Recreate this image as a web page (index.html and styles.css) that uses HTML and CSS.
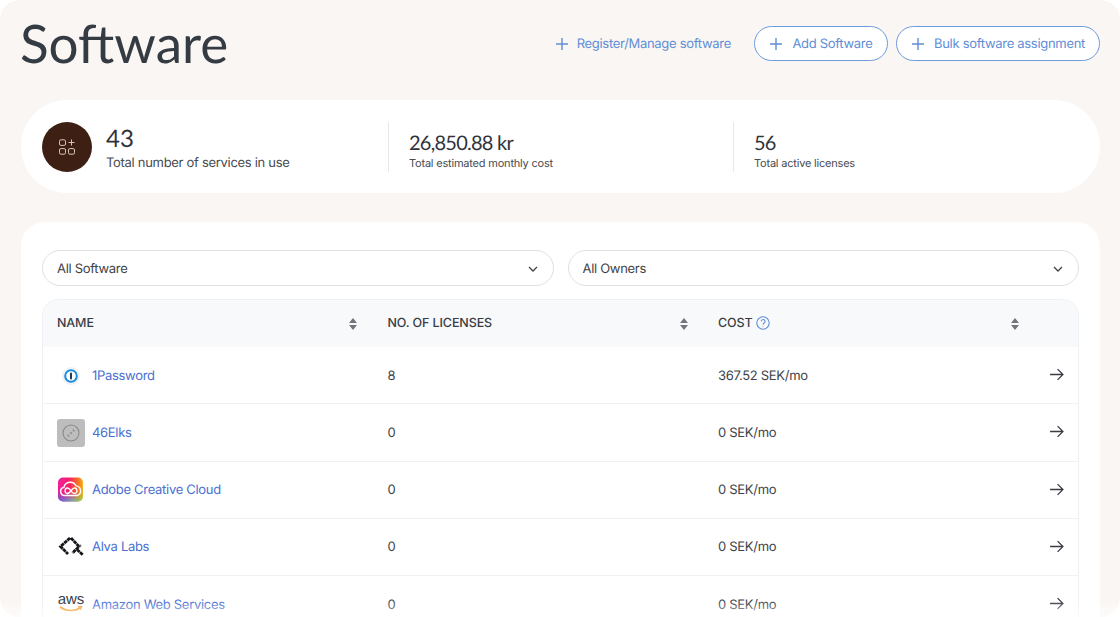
FILE: index.html
```html
<!DOCTYPE html>
<html lang="en">
<head>
<meta charset="utf-8">
<title>Software</title>
<link rel="stylesheet" href="styles.css">
</head>
<body>
<div class="frame">
  <header class="top">
    <h1 class="title">Software</h1>
    <div class="actions">
      <a class="action plain"><svg class="plus" viewBox="0 0 14 14"><path d="M7 1v12M1 7h12"/></svg>Register/Manage software</a>
      <a class="action pill"><svg class="plus" viewBox="0 0 14 14"><path d="M7 1v12M1 7h12"/></svg>Add Software</a>
      <a class="action pill"><svg class="plus" viewBox="0 0 14 14"><path d="M7 1v12M1 7h12"/></svg>Bulk software assignment</a>
    </div>
  </header>

  <section class="summary">
    <div class="stat first">
      <div class="badge">
        <svg viewBox="0 0 16 16" class="badge-icon"><rect x="0.5" y="0.8" width="6" height="5.6" rx="1.4"/><rect x="0.5" y="9.6" width="6" height="5.6" rx="1.4"/><rect x="9.5" y="9.6" width="6" height="5.6" rx="1.4"/><path d="M12.5 0.5v6M9.5 3.5h6"/></svg>
      </div>
      <div class="stat-text lead">
        <div class="value big">43</div>
        <div class="label big">Total number of services in use</div>
      </div>
    </div>
    <div class="stat second">
      <div class="stat-text">
        <div class="value">26,850.88 kr</div>
        <div class="label">Total estimated monthly cost</div>
      </div>
    </div>
    <div class="stat third">
      <div class="stat-text">
        <div class="value">56</div>
        <div class="label">Total active licenses</div>
      </div>
    </div>
  </section>

  <section class="panel">
    <div class="filters">
      <div class="select">All Software<svg class="chev" viewBox="0 0 10 6"><path d="M1 1l4 4 4-4"/></svg></div>
      <div class="select">All Owners<svg class="chev" viewBox="0 0 10 6"><path d="M1 1l4 4 4-4"/></svg></div>
    </div>
    <div class="table">
      <div class="row head">
        <div class="cell">NAME<svg class="sort" viewBox="0 0 8 12"><path d="M4 0l4 5H0zM4 12L0 7h8z"/></svg></div>
        <div class="cell">NO. OF LICENSES<svg class="sort" viewBox="0 0 8 12"><path d="M4 0l4 5H0zM4 12L0 7h8z"/></svg></div>
        <div class="cell"><span>COST</span><svg class="help" viewBox="0 0 14 14"><circle cx="7" cy="7" r="6.2"/><path d="M5.2 5.500a1.900 1.900 0 1 1 2.900 1.600c-.7.4-1.100.8-1.100 1.600"/><path d="M7 10.300v.5"/></svg><svg class="sort last" viewBox="0 0 8 12"><path d="M4 0l4 5H0zM4 12L0 7h8z"/></svg></div>
      </div>

      <div class="row">
        <div class="cell name">
          <span class="logo"><svg viewBox="0 0 28 28" class="l-svg"><circle cx="14" cy="14" r="9" fill="#eef2f6"/><circle cx="14" cy="14" r="5.800" fill="#fff" stroke="#1a8ce0" stroke-width="2"/><rect x="13" y="10.500" width="2" height="7" rx="1" fill="#1c3a5e"/></svg></span>
          <a class="link">1Password</a>
        </div>
        <div class="cell">8</div>
        <div class="cell">367.52 SEK/mo<svg class="arrow" viewBox="0 0 14 12"><path d="M1 6h12M8 1l5 5-5 5"/></svg></div>
      </div>

      <div class="row">
        <div class="cell name">
          <span class="logo"><svg viewBox="0 0 28 28" class="l-svg"><rect width="28" height="28" rx="3" fill="#bdbdbd"/><circle cx="14" cy="14" r="8" fill="none" stroke="#8a8a8a" stroke-width="1.100"/><path d="M10.500 15.500a4 4 0 0 0 2 2M17.500 12.500a4 4 0 0 0-2-2" fill="none" stroke="#8a8a8a" stroke-width="1.100"/><circle cx="14" cy="14" r="1" fill="#8a8a8a"/></svg></span>
          <a class="link">46Elks</a>
        </div>
        <div class="cell">0</div>
        <div class="cell">0 SEK/mo<svg class="arrow" viewBox="0 0 14 12"><path d="M1 6h12M8 1l5 5-5 5"/></svg></div>
      </div>

      <div class="row">
        <div class="cell name">
          <span class="logo"><svg viewBox="0 0 28 28" class="l-svg"><defs><linearGradient id="cc" x1="0" y1="0" x2="1" y2="0"><stop offset="0" stop-color="#f01f9a"/><stop offset="0.45" stop-color="#f5206a"/><stop offset="0.8" stop-color="#f8701f"/><stop offset="1" stop-color="#f5b41f"/></linearGradient><linearGradient id="cb" x1="0" y1="0" x2="1" y2="0"><stop offset="0" stop-color="#3a66f2"/><stop offset="0.55" stop-color="#5ac8d8"/><stop offset="1" stop-color="#7fe03f"/></linearGradient><linearGradient id="cf" x1="0" y1="0" x2="0" y2="1"><stop offset="0" stop-color="#fff" stop-opacity="0"/><stop offset="0.55" stop-color="#fff" stop-opacity="0"/><stop offset="1" stop-color="#fff"/></linearGradient><mask id="cm"><rect width="28" height="28" fill="url(#cf)"/></mask></defs><rect x="1" y="1.500" width="25" height="24" rx="5" fill="url(#cc)"/><rect x="1" y="1.500" width="25" height="24" rx="5" fill="url(#cb)" mask="url(#cm)"/><path d="M8 19.500a4.200 4.200 0 0 1-1-8.300 6.400 6.400 0 0 1 12-1.300 5 5 0 0 1 1.500 9.600zM10.500 17.500c3 0 4-5.500 7-5.500s3.500 5.500 0 5.500-4-5.500-7-5.500-3.500 5.500 0 5.500z" fill="none" stroke="#fff" stroke-width="1.400"/></svg></span>
          <a class="link">Adobe Creative Cloud</a>
        </div>
        <div class="cell">0</div>
        <div class="cell">0 SEK/mo<svg class="arrow" viewBox="0 0 14 12"><path d="M1 6h12M8 1l5 5-5 5"/></svg></div>
      </div>

      <div class="row">
        <div class="cell name">
          <span class="logo"><svg viewBox="0 0 28 28" class="l-svg"><path d="M13 5L3.500 13.500 11 21M14 5l8 8.500-6.500 6.500M20 16.500l6 5.500" fill="none" stroke="#15161a" stroke-width="2.800" stroke-dasharray="3.600 .5"/><circle cx="23.500" cy="12.500" r="1" fill="#777"/></svg></span>
          <a class="link">Alva Labs</a>
        </div>
        <div class="cell">0</div>
        <div class="cell">0 SEK/mo<svg class="arrow" viewBox="0 0 14 12"><path d="M1 6h12M8 1l5 5-5 5"/></svg></div>
      </div>

      <div class="row">
        <div class="cell name">
          <span class="logo aws"><span class="aws-word">aws</span><svg viewBox="0 0 24 7" class="aws-smile"><path d="M1 1c6 4.500 15 4.500 20 1" fill="none" stroke="#f29111" stroke-width="1.600"/><path d="M19 .8l3.500-.3-1 3.200" fill="none" stroke="#f29111" stroke-width="1.300"/></svg></span>
          <a class="link">Amazon Web Services</a>
        </div>
        <div class="cell">0</div>
        <div class="cell">0 SEK/mo<svg class="arrow" viewBox="0 0 14 12"><path d="M1 6h12M8 1l5 5-5 5"/></svg></div>
      </div>
    </div>
  </section>
  <div class="fade"></div>
</div>
</body>
</html>
```

FILE: styles.css
```css
* { box-sizing: border-box; }
html, body { margin: 0; padding: 0; background: #fff; }
body {
  font-family: Inter, "Liberation Sans", sans-serif;
  color: #363b40;
  text-rendering: geometricPrecision;
}
.frame {
  position: relative;
  width: 1120px;
  height: 617px;
  overflow: hidden;
  background: #faf6f3;
  border-radius: 20px;
  padding: 0 20px 0 21px;
}
.top {
  height: 100px;
  display: flex;
  align-items: flex-start;
  justify-content: space-between;
}
.title {
  margin: 12px 0 0 -1px;
  font-family: Lato, "Noto Sans", sans-serif;
  font-weight: 400;
  font-size: 53px;
  line-height: 64px;
  color: #343b43;
}
.actions {
  display: flex;
  align-items: center;
  gap: 8px;
  margin-top: 26px;
  height: 35px;
}
.action {
  display: flex;
  align-items: center;
  gap: 9px;
  height: 35px;
  font-size: 13px;
  letter-spacing: -0.300px;
  color: #5f8ed6;
}
.plain { margin-right: 15px; gap: 8px; }
.pill {
  border: 1.200px solid #6f9bdc;
  border-radius: 18px;
  padding: 0 14px 0 14.500px;
  background: #fff;
}
.plus { width: 14px; height: 14px; fill: none; stroke: #5f8ed6; stroke-width: 1.400; }

.summary {
  display: flex;
  align-items: center;
  height: 93px;
  background: #fff;
  border-radius: 46px;
  padding-left: 21px;
}
.stat { display: flex; align-items: center; height: 50px; }
.first { width: 346px; gap: 14px; }
.second { width: 345px; padding-left: 20px; border-left: 1px solid #e8e8e8; }
.third { padding-left: 20px; border-left: 1px solid #e8e8e8; }
.badge {
  width: 50px;
  height: 50px;
  border-radius: 50%;
  background: #3d1f14;
  display: flex;
  align-items: center;
  justify-content: center;
}
.badge-icon { width: 16px; height: 16px; fill: none; stroke: #d6c4b6; stroke-width: 1; }
.stat-text { display: flex; flex-direction: column; }
.stat-text.lead { padding-top: 4px; }
.value {
  font-family: Lato, "Noto Sans", sans-serif;
  font-size: 20px;
  line-height: 23px;
  letter-spacing: -0.750px;
  margin-top: 9px;
  color: #2f343a;
}
.value.big { font-size: 24px; line-height: 27px; letter-spacing: 0; margin-top: 0; }
.label { font-size: 11px; line-height: 16px; letter-spacing: -0.200px; color: #484c50; }
.label.big { font-size: 13px; line-height: 18px; margin-top: 2px; letter-spacing: -0.300px; }

.panel {
  margin-top: 29px;
  background: #fff;
  border-radius: 24px;
  padding: 28px 21px 0;
  height: 420px;
}
.filters { display: flex; gap: 14px; }
.select {
  flex: 1;
  height: 36px;
  display: flex;
  align-items: center;
  justify-content: space-between;
  border: 1.200px solid #dfdfdf;
  border-radius: 18px;
  padding: 1px 15px 0 14px;
  font-size: 13px;
  letter-spacing: -0.300px;
  color: #3f4347;
}
.chev { width: 10px; height: 6px; fill: none; stroke: #3f4347; stroke-width: 1.300; }
.table {
  margin-top: 13px;
  border: 1px solid #eef0f4;
  border-radius: 16px 16px 0 0;
  overflow: hidden;
}
.row {
  display: grid;
  grid-template-columns: 330.500px 330.500px 1fr;
  height: 57.250px;
  align-items: center;
  border-bottom: 1px solid #f0f1f4;
  font-size: 13px;
  letter-spacing: -0.300px;
  color: #40444a;
}
.row.head {
  height: 47px;
  background: #f8f9fb;
  border-bottom: 0;
  font-size: 12.500px;
  font-weight: 500;
  letter-spacing: -0.100px;
  color: #3a3e44;
}
.row.head .cell { padding-top: 0; padding-bottom: 1px; }
.cell {
  position: relative;
  display: flex;
  align-items: center;
  padding-left: 14px;
  padding-top: 1px;
  height: 100%;
}
.cell.name { gap: 7px; padding-left: 14px; }
.sort {
  position: absolute;
  right: 16.500px;
  top: 50%;
  margin-top: -6px;
  width: 8px;
  height: 12px;
  fill: #73767b;
}
.sort.last { right: 59px; }
.help {
  width: 14px;
  height: 14px;
  margin-left: 3px;
  fill: none;
  stroke: #5f8ed6;
  stroke-width: 1.100;
}
.arrow {
  position: absolute;
  right: 14px;
  top: 50%;
  margin-top: -7px;
  width: 15px;
  height: 13px;
  fill: none;
  stroke: #3a3e44;
  stroke-width: 1.200;
}
.logo {
  width: 28px;
  height: 28px;
  flex: none;
  display: flex;
  flex-direction: column;
  align-items: center;
  justify-content: center;
}
.l-svg { width: 28px; height: 28px; display: block; }
.aws { margin-top: -2px; }
.aws-word {
  font-family: "Liberation Sans", sans-serif;
  font-weight: 400;
  font-size: 15px;
  line-height: 12px;
  letter-spacing: 0;
  color: #353a40;
}
.aws-smile { width: 24px; height: 7px; display: block; }
.link { color: #4a6fd1; font-size: 13px; }
.fade {
  position: absolute;
  left: 0;
  right: 0;
  bottom: 0;
  height: 16px;
  background: linear-gradient(to bottom, rgba(255,255,255,0), rgba(255,255,255,0.7));
  pointer-events: none;
}
```
